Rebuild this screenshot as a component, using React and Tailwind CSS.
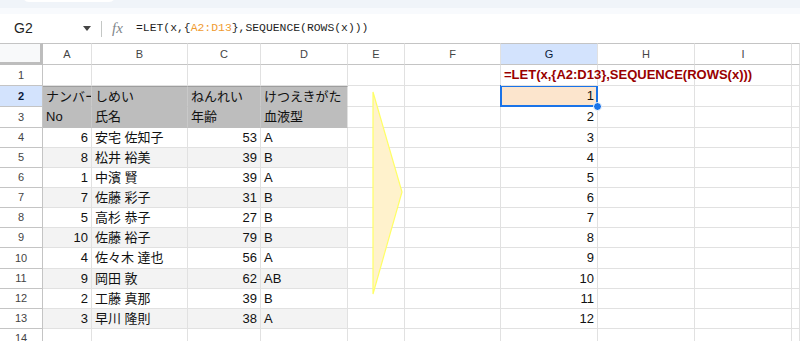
import React from "react";

const COLS = "grid-cols-[43px_49px_96px_73px_87px_57px_96px_97px_97px_97px_1fr]";
const ROW_H = [21, 21, 21, 20, 20, 20, 20, 20, 20, 21, 20, 20, 20, 20];

const data = [
  [6, "安宅 佐知子", 53, "A"],
  [8, "松井 裕美", 39, "B"],
  [1, "中濱 賢", 39, "A"],
  [7, "佐藤 彩子", 31, "B"],
  [5, "高杉 恭子", 27, "B"],
  [10, "佐藤 裕子", 79, "B"],
  [4, "佐々木 達也", 56, "A"],
  [9, "岡田 敦", 62, "AB"],
  [2, "工藤 真那", 39, "B"],
  [3, "早川 隆則", 38, "A"],
];

function Cell({ children, right, bg, className = "", h }) {
  return (
    <div
      className={`box-border border-r border-b border-[#e1e1e1] flex items-center overflow-hidden whitespace-nowrap text-[13px] text-[#111] px-[3px] ${
        right ? "justify-end" : "justify-start"
      } ${bg || ""} ${className}`}
      style={{ height: h }}
    >
      {children}
    </div>
  );
}

function RowHead({ n, h, active }) {
  return (
    <div
      className={`box-border border-r border-b border-[#c4c4c4] flex items-center justify-center text-[11px] ${
        active ? "bg-[#d3e3fd] text-[#0b1b3a] font-bold" : "bg-white text-[#444]"
      }`}
      style={{ height: h }}
    >
      {n}
    </div>
  );
}

export default function App() {
  const rows = [];
  for (let r = 1; r <= 14; r++) {
    const h = ROW_H[r - 1];
    const cells = [];
    cells.push(<RowHead key="h" n={r} h={h} active={r === 2} />);
    let a = "", b = "", c = "", d = "";
    let bg = "";
    let isHead = false;
    if (r === 2) {
      a = "ナンバー"; b = "しめい"; c = "ねんれい"; d = "けつえきがた"; isHead = true;
    } else if (r === 3) {
      a = "No"; b = "氏名"; c = "年齢"; d = "血液型"; isHead = true;
    } else if (r >= 4 && r <= 13) {
      [a, b, c, d] = data[r - 4];
      if (r % 2 === 1) bg = "bg-[#f3f3f3]";
    }
    const headBg = "bg-[#bdbdbd] border-b-[#bdbdbd]";
    const hb = isHead ? headBg : bg;
    const topLine = r === 2 ? "border-t border-t-[#9e9e9e]" : "";
    cells.push(
      <Cell key="a" h={h} right={!isHead} bg={hb} className={`${topLine} ${isHead ? "border-r-[#c9c9c9]" : ""}`}>
        {a}
      </Cell>
    );
    cells.push(
      <Cell key="b" h={h} bg={hb} className={`${topLine} ${isHead ? "border-r-[#c9c9c9]" : ""}`}>
        {b}
      </Cell>
    );
    cells.push(
      <Cell key="c" h={h} right={!isHead} bg={hb} className={`${topLine} ${isHead ? "border-r-[#c9c9c9]" : ""}`}>
        {c}
      </Cell>
    );
    cells.push(
      <Cell key="d" h={h} bg={hb} className={topLine}>
        {d}
      </Cell>
    );
    cells.push(<Cell key="e" h={h} />);
    cells.push(<Cell key="f" h={h} />);
    if (r === 1) {
      cells.push(
        <div
          key="g"
          className="box-border border-r border-b border-[#e1e1e1] flex items-center whitespace-nowrap overflow-visible px-[3px] relative z-10"
          style={{ height: h }}
        >
          <span className="text-[13px] font-bold text-[#990000]">=LET(x,{"{"}A2:D13{"}"},SEQUENCE(ROWS(x)))</span>
        </div>
      );
      cells.push(<div key="h2" className="box-border border-r border-b border-[#e1e1e1]" style={{ height: h }} />);
      cells.push(<div key="i" className="box-border border-r border-b border-[#e1e1e1]" style={{ height: h }} />);
    } else {
      const val = r >= 2 && r <= 13 ? r - 1 : "";
      if (r === 2) {
        cells.push(
          <div
            key="g"
            className="box-border border-r border-b border-[#e1e1e1] bg-[#fce5cd] relative flex items-center justify-end px-[3px] text-[13px] text-[#111]"
            style={{ height: h }}
          >
            {val}
            <div className="absolute left-[-1px] top-[-1px] right-[-1px] bottom-[-1px] border-2 border-[#1a73e8] pointer-events-none" />
            <div className="absolute right-[-5px] bottom-[-5px] w-[9px] h-[9px] rounded-full bg-[#1a73e8] border border-white z-20" />
          </div>
        );
      } else {
        cells.push(
          <Cell key="g" h={h} right>
            {val}
          </Cell>
        );
      }
      cells.push(<Cell key="h2" h={h} />);
      cells.push(<Cell key="i" h={h} />);
    }
    cells.push(<Cell key="j" h={h} />);
    rows.push(...cells.map((c, i) => React.cloneElement(c, { key: `${r}-${i}` })));
  }

  const letters = ["A", "B", "C", "D", "E", "F", "G", "H", "I", ""];

  return (
    <div className="w-[800px] h-[341px] overflow-hidden bg-white relative font-['Liberation_Sans','Noto_Sans_CJK_JP',sans-serif]">
      {/* top strip */}
      <div className="h-[14px] bg-[#f0f4f9] relative overflow-hidden">
        <div className="absolute left-[22px] top-[-12px] w-[94px] h-[14px] rounded-[8px] bg-white" />
        <div className="absolute left-0 right-0 bottom-0 h-[6px] bg-[#f8fafd]" />
      </div>
      {/* formula bar */}
      <div className="h-[29px] flex items-center bg-white">
        <div className="w-[80px] pl-[14px] text-[14px] text-[#1f1f1f]">G2</div>
        <svg width="8" height="5" viewBox="0 0 8 5" className="ml-[3px]">
          <path d="M0 0 L8 0 L4 5 Z" fill="#444" />
        </svg>
        <div className="ml-[10px] w-px h-[16px] bg-[#c4c7c5]" />
        <div className="ml-[10px] w-[16px] text-[15px] italic font-['Liberation_Serif',serif] text-[#80868b] leading-none">
          fx
        </div>
        <div className="ml-[8px] text-[11.4px] font-['Liberation_Mono',monospace] text-[#1f1f1f]">
          =LET(x,{"{"}
          <span className="text-[#f09b30]">A2:D13</span>
          {"}"},SEQUENCE(ROWS(x)))
        </div>
      </div>
      {/* grid */}
      <div className={`grid ${COLS} relative`}>
        <div className="h-[22px] box-border border-t border-[#c4c4c4] border-r-[3px] border-b-[3px] border-r-[#bdbdbd] border-b-[#bdbdbd] bg-[#f8f9fa]" />
        {letters.map((l, i) => (
          <div
            key={i}
            className={`h-[22px] box-border border-t border-b border-r border-[#c4c4c4] border-r-[#e1e1e1] flex items-center justify-center text-[11px] ${
              l === "G" ? "bg-[#d3e3fd] text-[#0b1b3a]" : "bg-white text-[#444]"
            }`}
          >
            {l}
          </div>
        ))}
        {rows}
        <svg className="absolute left-[372px] top-[48px] pointer-events-none" width="34" height="206" viewBox="0 0 34 206">
          <polygon points="1,1 30,101 1,203" fill="#fff2cc" stroke="#ffff66" strokeWidth="1.2" />
        </svg>
      </div>
    </div>
  );
}
